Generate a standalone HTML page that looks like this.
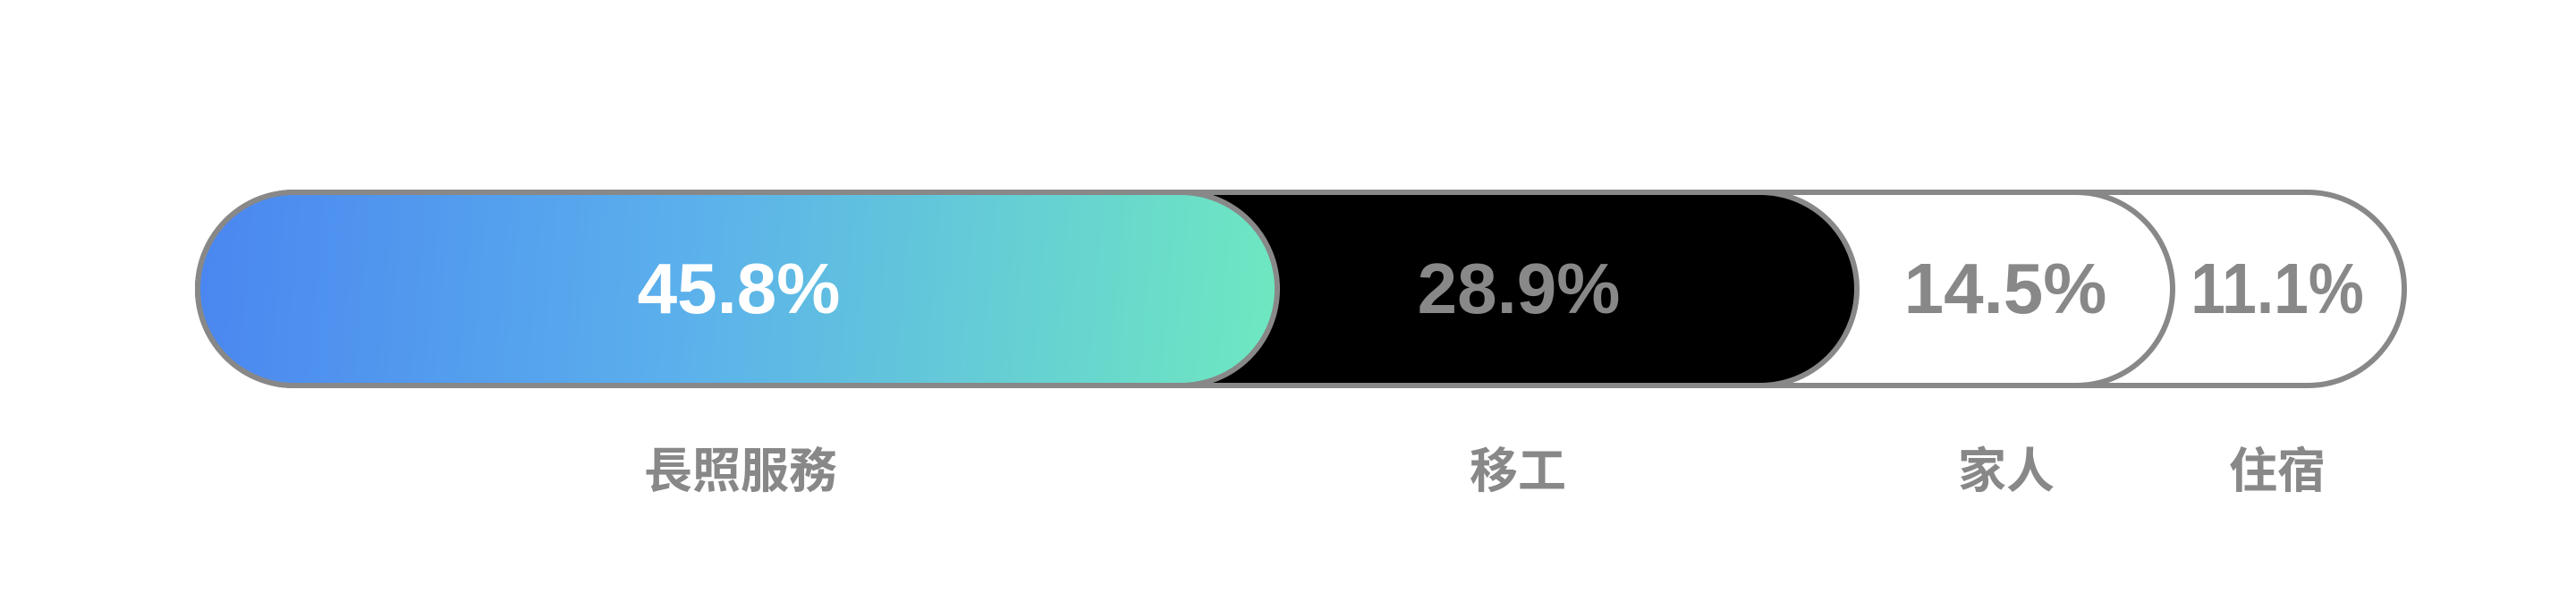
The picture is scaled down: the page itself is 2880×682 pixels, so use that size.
<!DOCTYPE html>
<html><head><meta charset="utf-8"><style>
html,body{margin:0;padding:0;width:2880px;height:682px;background:#fff;overflow:hidden}
.p{position:absolute;left:218px;top:212px;height:222px;box-sizing:border-box;border:6px solid #888;border-radius:111px}
.t{position:absolute;top:323px;transform:translate(-50%,-50%);font:bold 80px "Liberation Sans",sans-serif;color:#888;white-space:nowrap;line-height:1}
.l{position:absolute;top:527px;transform:translate(-50%,-50%);font:bold 54px "Liberation Sans","Noto Sans CJK TC",sans-serif;color:#888;white-space:nowrap;line-height:1}
</style></head><body>
<div class="p" style="width:2473px;background:#fff;z-index:1"></div>
<div class="p" style="width:2214px;background:#fff;z-index:2"></div>
<div class="p" style="width:1861px;background:#000;z-index:3"></div>
<div class="p" style="width:1213px;background:linear-gradient(95deg,#4a86f0 0%,#5bb0ec 45%,#6ee8c0 100%);z-index:4"></div>
<div class="t" style="left:826px;color:#fff;z-index:5">45.8%</div>
<div class="t" style="left:1698px;z-index:5">28.9%</div>
<div class="t" style="left:2242px;z-index:5">14.5%</div>
<div class="t" style="left:2546px;z-index:5;transform:translate(-50%,-50%) scaleX(0.87)">11.1%</div>
<div class="l" style="left:828px">長照服務</div>
<div class="l" style="left:1697px">移工</div>
<div class="l" style="left:2243px">家人</div>
<div class="l" style="left:2546px">住宿</div>
</body></html>
